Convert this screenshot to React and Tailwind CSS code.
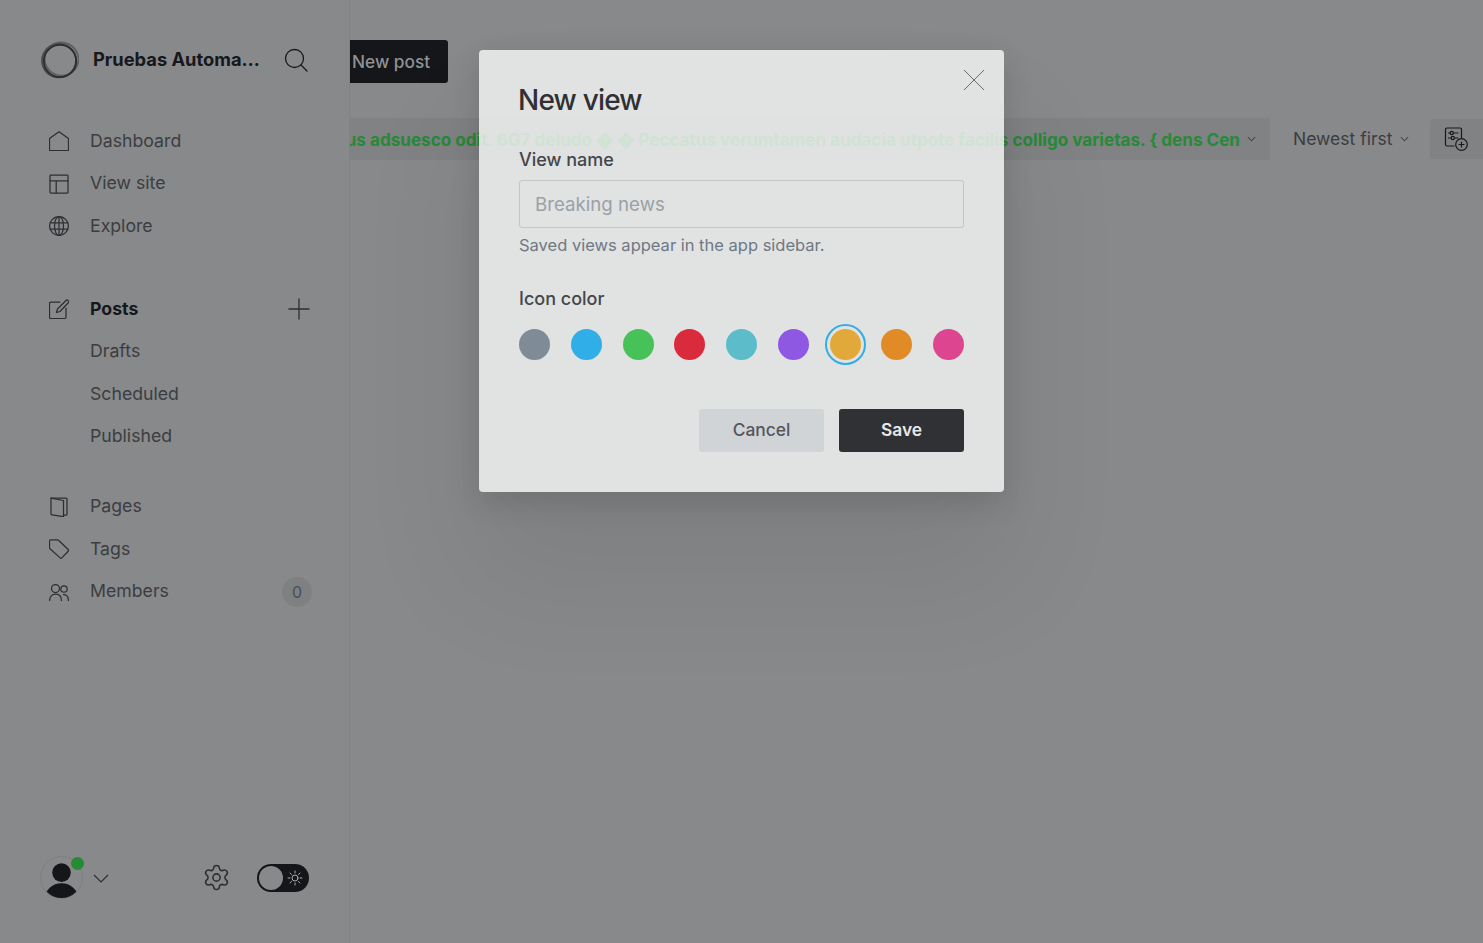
import React from "react";
import { Settings } from "lucide-react";

const S = ({ children, className = "w-5 h-5", vb = "0 0 20 20", sw = 1.25 }) => (
  <svg viewBox={vb} className={className} fill="none" stroke="currentColor" strokeWidth={sw} strokeLinecap="round" strokeLinejoin="round">{children}</svg>
);

const Home = () => <S><path d="M10 .7 19.500 7.500V19a.7.7 0 0 1-.7.7H1.200a.7.7 0 0 1-.7-.7V7.500Z" /></S>;
const Layout = () => <S><rect x="1" y="1.200" width="18" height="17.800" rx=".8" /><path d="M1 6.800h18M7.200 6.800V19" /></S>;
const Globe = () => <S><circle cx="10" cy="10" r="9.400" /><ellipse cx="10" cy="10" rx="4.500" ry="9.400" /><path d="M1.300 6.800h17.400M1.300 13.200h17.400M10 .6v18.800" /></S>;
const Edit = () => <S><path d="M11 3H2a1.500 1.500 0 0 0-1.500 1.500V18A1.500 1.500 0 0 0 2 19.500h13.500A1.500 1.500 0 0 0 17 18V9" /><path d="M17.500 1a1.800 1.800 0 0 1 2 2.500L11 12.500l-3.500 1 1-3.500Z" /></S>;
const Page = () => <S><path d="M2 1.200h15a1 1 0 0 1 1 1v15a1 1 0 0 1-1 1h-2.500" /><path d="M2 1.200 14.500 3.500v16.200L3 17.800A1.200 1.200 0 0 1 2 16.600Z" /></S>;
const Tag = () => <S><path d="M1.500 .8h7a1.500 1.500 0 0 1 1 .4l9.700 9.300a1.200 1.200 0 0 1 0 1.700l-6.400 6.700a1.200 1.200 0 0 1-1.700 0L1 9.700A1.500 1.500 0 0 1 .5 8.600V1.800a1 1 0 0 1 1-1Z" /></S>;
const Users = () => <S><circle cx="6.500" cy="6.500" r="4" /><path d="M.6 18.500c0-4 2.500-6.300 5.900-6.300s5.900 2.300 5.900 6.300" /><circle cx="15" cy="7" r="3.200" /><path d="M14.500 12.500c2.800 0 4.900 2.200 4.900 6" /></S>;

const NavItem = ({ icon, label, bold, right }) => (
  <div className="flex h-[42.5px] items-center pl-[49px] pr-[38px]">
    <div className="flex w-[41px] items-center text-[#2e2f32]">{icon}</div>
    <span className={`text-[17.7px] ${bold ? "font-bold text-[#17181b]" : "text-[#3c3d41]"}`}>{label}</span>
    {right && <div className="ml-auto">{right}</div>}
  </div>
);

const colors = ["#7f8b97", "#30aee7", "#46c258", "#da2b3d", "#5dbcc9", "#8e58e3", "#e0a93a", "#e18b27", "#de4590"];

export default function App() {
  return (
    <div className="relative flex h-[943px] w-[1483px] overflow-hidden bg-[#87898b] font-['Inter',sans-serif]">
      <aside className="flex w-[350px] shrink-0 flex-col border-r border-[#808284] pb-[44px]">
        <div className="flex items-center px-[41px] pt-[41px]">
          <svg viewBox="0 0 38 38" className="h-[38px] w-[38px] shrink-0" fill="none">
            <ellipse cx="20.500" cy="17.800" rx="17" ry="16.500" stroke="#5c5e61" strokeWidth="1.800" transform="rotate(25 20 18)" />
            <ellipse cx="17.800" cy="19.500" rx="17" ry="16.800" stroke="#4a4c4f" strokeWidth="1.800" transform="rotate(-20 18 19)" />
            <circle cx="19" cy="20" r="16.200" stroke="#2c2d30" strokeWidth="1.800" />
          </svg>
          <span className="mb-[1px] ml-[14px] w-[170px] truncate text-[18.3px] font-bold text-[#17181b]">Pruebas Automatizadas</span>
          <svg viewBox="0 0 24 24" className="ml-[21px] h-[24px] w-[24px] text-[#17181b]" fill="none" stroke="currentColor" strokeWidth="1.300" strokeLinecap="round">
            <circle cx="10.500" cy="10.500" r="9" />
            <path d="M17 17l6 6" />
          </svg>
        </div>
        <nav className="mt-[41px]">
          <NavItem icon={<Home />} label="Dashboard" />
          <NavItem icon={<Layout />} label="View site" />
          <NavItem icon={<Globe />} label="Explore" />
        </nav>
        <nav className="mt-[40.5px]">
          <NavItem icon={<Edit />} label="Posts" bold right={
            <svg viewBox="0 0 22 22" className="h-[22px] w-[22px] -translate-x-[1px] text-[#2e2f32]" fill="none" stroke="currentColor" strokeWidth="1.300"><path d="M11 0.500v21M0.500 11h21" /></svg>
          } />
          <NavItem label="Drafts" />
          <NavItem label="Scheduled" />
          <NavItem label="Published" />
        </nav>
        <nav className="mt-[27.5px]">
          <NavItem icon={<Page />} label="Pages" />
          <NavItem icon={<Tag />} label="Tags" />
          <NavItem icon={<Users />} label="Members" right={
            <div className="flex h-[30px] w-[30px] translate-x-[1px] items-center justify-center rounded-full bg-[#7e8082] text-[16px] text-[#45505c]">0</div>
          } />
        </nav>
        <div className="mt-auto flex items-center pl-[40px]">
          <div className="relative h-[43px] w-[43px]">
            <div className="h-full w-full overflow-hidden rounded-full border border-[#7c7e80]">
              <svg viewBox="0 0 42 42" className="h-full w-full"><circle cx="21" cy="16" r="9.500" fill="#14161a" /><ellipse cx="21" cy="42" rx="17" ry="15" fill="#14161a" /></svg>
            </div>
            <div className="absolute right-[-1px] top-[1px] h-[13px] w-[13px] rounded-full bg-[#268a36]" />
          </div>
          <svg viewBox="0 0 16 10" className="ml-[10px] h-[10px] w-[16px] text-[#2e2f32]" fill="none" stroke="currentColor" strokeWidth="1.200"><path d="M1 2l7 7 7-7" /></svg>
          <Settings className="ml-[93px] h-[29px] w-[29px] text-[#2e2f32]" strokeWidth={1.3} />
          <div className="ml-[26px] flex h-[28px] w-[52px] items-center rounded-full bg-[#14161a] pl-[2px]">
            <div className="h-[24px] w-[24px] rounded-full bg-[#87898b]" />
            <svg viewBox="0 0 16 16" className="ml-[4px] h-[16px] w-[16px] text-[#a8aaac]" fill="none" stroke="currentColor" strokeWidth="1" strokeLinecap="round">
              <circle cx="8" cy="8" r="3" />
              <path d="M8 1v2M8 13v2M1 8h2M13 8h2M3 3l1.500 1.500M11.500 11.500 13 13M3 13l1.500-1.500M11.500 4.500 13 3" />
            </svg>
          </div>
        </div>
      </aside>

      <main className="min-w-0 flex-1 overflow-hidden">
        <div className="ml-[-2px] mt-[40px] flex h-[43px] w-[100px] items-center rounded-[3px] bg-[#14161a] pl-[4px] text-[17.3px] font-medium text-[#8f9194]">New post</div>
        <div className="mt-[35px] flex items-center">
          <div className="flex h-[42px] w-[920px] shrink-0 items-center justify-end overflow-hidden rounded-[3px] bg-[#808284] pr-[14px]">
            <span className="mt-[1px] whitespace-nowrap text-[17.1px] font-bold text-[#268a36]">Peccatus adsuesco odit. 6G7 deludo � � Peccatus verumtamen audacia utpote facilis colligo varietas. {"{"} dens Cen</span>
            <svg viewBox="0 0 10 6" className="ml-[7px] h-[6px] w-[9px] shrink-0 text-[#45474a]" fill="none" stroke="currentColor" strokeWidth="1.200"><path d="M1 1l4 4 4-4" /></svg>
          </div>
          <div className="ml-[23px] flex shrink-0 items-center">
            <span className="whitespace-nowrap text-[17.5px] text-[#3c3d41]">Newest first</span>
            <svg viewBox="0 0 10 6" className="ml-[8px] h-[6px] w-[9px] text-[#45474a]" fill="none" stroke="currentColor" strokeWidth="1.200"><path d="M1 1l4 4 4-4" /></svg>
          </div>
          <div className="ml-[21px] flex h-[40px] w-[53px] shrink-0 items-center rounded-l-[3px] bg-[#808284] pl-[14px]">
            <svg viewBox="0 0 24 24" className="h-[24px] w-[24px] text-[#17181b]" fill="none" stroke="currentColor" strokeWidth="1.200" strokeLinecap="round">
              <path d="M10 19H3a1.500 1.500 0 0 1-1.500-1.500V2.500A1.500 1.500 0 0 1 3 1h13a1.500 1.500 0 0 1 1.500 1.500V11" />
              <path d="M9.500 6H14M4.500 6h1.500M11 11h3M4.500 11h2" /><circle cx="7.700" cy="6" r="1.600" /><circle cx="8.800" cy="11" r="1.600" />
              <circle cx="17.500" cy="17.500" r="5.800" /><path d="M17.500 15v5M15 17.500h5" />
            </svg>
          </div>
        </div>
      </main>

      <div className="absolute left-[479px] top-[50px] h-[442px] w-[525px] rounded-[4px] bg-[#f3f4f4]/[0.83] px-[40px] pt-[33px] shadow-[0_80px_120px_10px_rgba(0,0,0,0.07),0_10px_30px_rgba(0,0,0,0.13)]">
        <svg viewBox="0 0 22 22" className="absolute right-[19px] top-[19px] h-[22px] w-[22px] text-[#6b6d70]" fill="none" stroke="currentColor" strokeWidth="1"><path d="M1 1l20 20M21 1 1 21" /></svg>
        <h2 className="-ml-[1px] text-[28px] leading-[34px] font-medium tracking-[-0.8px] text-[#2f3033]">New view</h2>
        <label className="mt-[31px] block text-[18px] leading-[24px] font-medium text-[#44464a]">View name</label>
        <div className="mt-[8px] flex h-[48px] w-[445px] items-center rounded-[3px] border border-[#c2c6c9] pl-[15px] pt-[2px] text-[18.7px] text-[#9aa1a8]">Breaking news</div>
        <p className="mt-[6px] text-[16.5px] leading-[22px] text-[#6e7985]">Saved views appear in the app sidebar.</p>
        <label className="mt-[31px] block text-[18px] leading-[24px] font-medium text-[#44464a]">Icon color</label>
        <div className="mt-[18px] flex w-[445px] justify-between">
          {colors.map((c, i) => (
            <div key={c} className={`h-[31px] w-[31px] rounded-full ${i === 6 ? "outline outline-2 outline-offset-[3px] outline-[#30aee7]" : ""}`} style={{ backgroundColor: c }} />
          ))}
        </div>
        <div className="mt-[49px] flex w-[445px] justify-end gap-[15px]">
          <div className="flex h-[43px] w-[125px] items-center justify-center rounded-[3px] bg-[#d0d4d7] text-[17.4px] font-medium text-[#55575b]">Cancel</div>
          <div className="flex h-[43px] w-[125px] items-center justify-center rounded-[3px] bg-[#303135] text-[17.4px] font-semibold text-[#e6e8e7]">Save</div>
        </div>
      </div>
    </div>
  );
}
